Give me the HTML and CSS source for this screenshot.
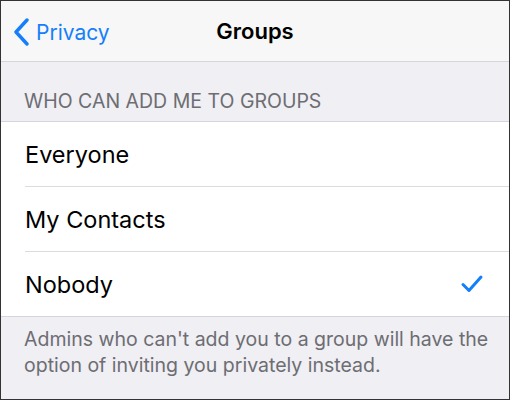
FILE: index.html
```html
<!DOCTYPE html>
<html lang="en">
<head>
  <meta charset="UTF-8">
  <title>Groups</title>
  <link rel="stylesheet" href="styles.css">
</head>
<body>
  <div class="screen">
    <div class="nav-bar">
      <a class="back-link" href="#">
        <svg class="chevron" width="18" height="28" viewBox="0 0 18 28">
          <path d="M15 2 L4 14 L15 26" fill="none" stroke="#157efb" stroke-width="3.4" stroke-linecap="round" stroke-linejoin="round"/>
        </svg>
        <span>Privacy</span>
      </a>
      <h1 class="nav-title">Groups</h1>
    </div>

    <div class="section-header">WHO CAN ADD ME TO GROUPS</div>

    <ul class="option-list">
      <li class="option">Everyone</li>
      <li class="option">My Contacts</li>
      <li class="option selected">
        Nobody
        <svg class="check" width="24" height="20" viewBox="0 0 24 20">
          <path d="M3 10.5 L9 16.5 L21 3" fill="none" stroke="#157efb" stroke-width="3" stroke-linecap="round" stroke-linejoin="round"/>
        </svg>
      </li>
    </ul>

    <p class="section-footer">Admins who can't add you to a group will have the option of inviting you privately instead.</p>
  </div>
</body>
</html>
```

FILE: styles.css
```css
body {
  margin: 0;
  font-family: "Inter", "Roboto", sans-serif;
  background-color: #efeff4;
}

.screen {
  box-sizing: border-box;
  width: 510px;
  height: 400px;
  border: 1px solid #333;
  background-color: #efeff4;
  overflow: hidden;
}

.nav-bar {
  position: relative;
  height: 60px;
  background-color: #f7f7f7;
  border-bottom: 1px solid #d6d6da;
  display: flex;
  align-items: center;
  justify-content: center;
}

.back-link {
  position: absolute;
  left: 11px;
  top: 17px;
  display: flex;
  align-items: center;
  gap: 6px;
  color: #157efb;
  text-decoration: none;
  font-size: 21px;
}

.nav-title {
  margin: 0;
  font-size: 22px;
  font-weight: 600;
  color: #000;
}

.section-header {
  height: 60px;
  box-sizing: border-box;
  padding: 27px 0 0 23px;
  font-size: 19.5px;
  color: #6d6d72;
  border-bottom: 1px solid #d6d6da;
}

.option-list {
  list-style: none;
  margin: 0;
  padding: 0 0 0 24px;
  background-color: #fff;
  border-bottom: 1px solid #d6d6da;
}

.option {
  height: 64px;
  display: flex;
  align-items: center;
  justify-content: space-between;
  padding-right: 25px;
  font-size: 23.5px;
  color: #000;
  border-bottom: 1px solid #dcdcdf;
}

.option:last-child {
  border-bottom: none;
}

.section-footer {
  margin: 0;
  padding: 9px 20px 0 23px;
  font-size: 19.5px;
  line-height: 26px;
  color: #6d6d72;
}
```
